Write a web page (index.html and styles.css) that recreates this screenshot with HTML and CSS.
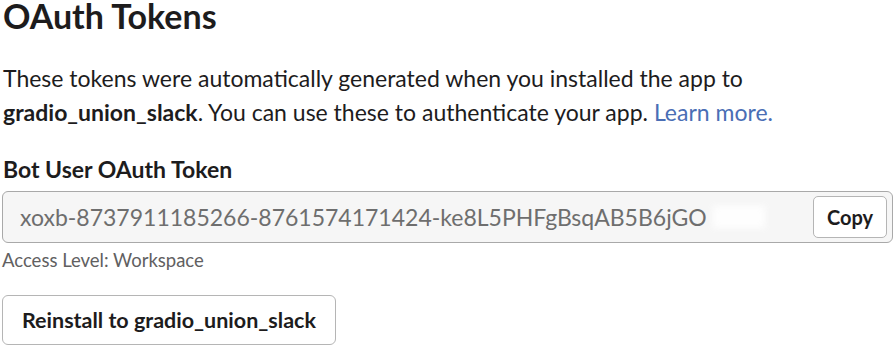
FILE: index.html
```html
<!DOCTYPE html>
<html>
<head>
<meta charset="utf-8">
<link rel="stylesheet" href="styles.css">
</head>
<body>
<main class="page">
  <h1 class="title">OAuth Tokens</h1>
  <p class="desc">These tokens were automatically generated when you installed the app to <b>gradio_union_slack</b>. You can use these to authenticate your app. <a class="link" href="#">Learn more.</a></p>
  <h2 class="label">Bot User OAuth Token</h2>
  <div class="token-box">
    <span class="token">xoxb-8737911185266-8761574171424-ke8L5PHFgBsqAB5B6jGO</span>
    <span class="blur"></span>
    <button class="copy">Copy</button>
  </div>
  <div class="access">Access Level: Workspace</div>
  <button class="reinstall">Reinstall to gradio_union_slack</button>
</main>
</body>
</html>
```
FILE: styles.css
```css
html, body {
  margin: 0;
  padding: 0;
  background: #ffffff;
}
body {
  font-family: Lato, "Open Sans", sans-serif;
  color: #1d1c1d;
}
.page {
  padding: 0 2px;
  display: flex;
  flex-direction: column;
  align-items: flex-start;
}
.title {
  margin: 0;
  font-size: 34px;
  font-weight: 700;
  line-height: 30px;
  padding-top: 1px;
  padding-left: 1px;
}
.desc {
  margin: 30px 0 0;
  font-size: 23px;
  line-height: 34px;
  padding-left: 1px;
  max-width: 860px;
}
.desc b { font-weight: 700; }
.link {
  color: #4a6eb5;
  text-decoration: none;
}
.label {
  margin: 25px 0 0;
  font-size: 23px;
  font-weight: 700;
  line-height: 30px;
  padding-left: 1px;
}
.token-box {
  margin-top: 7px;
  box-sizing: border-box;
  width: 891px;
  height: 52px;
  border: 1.5px solid #a9a9a9;
  border-radius: 6px;
  background: #f6f6f6;
  display: flex;
  align-items: center;
  padding: 0 5px 0 17px;
}
.token {
  font-size: 23px;
  color: #6e6e6e;
  white-space: nowrap;
}
.blur {
  width: 52px;
  height: 22px;
  margin-left: 6px;
  background: #ffffff;
  filter: blur(3px);
  opacity: 0.9;
}
.copy {
  margin-left: auto;
  box-sizing: border-box;
  height: 42px;
  width: 74px;
  border: 1.5px solid #b5b5b5;
  border-radius: 5px;
  background: #ffffff;
  font-family: Lato, sans-serif;
  font-weight: 700;
  font-size: 20px;
  color: #1d1c1d;
  padding: 0;
}
.access {
  margin-top: 5px;
  font-size: 18.5px;
  color: #616061;
  line-height: 24px;
}
.reinstall {
  margin-top: 23px;
  box-sizing: border-box;
  height: 50px;
  padding: 0 19px;
  border: 1.5px solid #b5b5b5;
  border-radius: 6px;
  background: #ffffff;
  font-family: Lato, sans-serif;
  font-weight: 700;
  font-size: 21.5px;
  color: #1d1c1d;
}
```
